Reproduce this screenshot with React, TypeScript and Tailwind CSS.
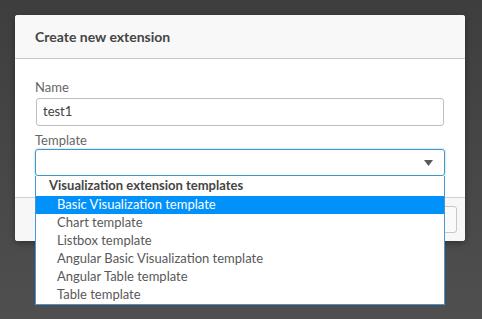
const options = [
  'Basic Visualization template',
  'Chart template',
  'Listbox template',
  'Angular Basic Visualization template',
  'Angular Table template',
  'Table template',
];

export default function App() {
  return (
    <div
      className="h-[319px] w-[482px] bg-gradient-to-b from-[#3e3e3e] to-[#4f4f4f] pl-[15px] pt-[15px] text-[13px] text-[#595959]"
      style={{ fontFamily: 'Lato, "Open Sans", sans-serif' }}
    >
      <div className="relative flex h-[226px] w-[450px] flex-col rounded-[3px] bg-white shadow-[0_2px_6px_rgba(0,0,0,0.35)]">
        <div className="flex h-[44px] items-center border-b border-[#c8c8c8] bg-[#f8f8f8] px-5 rounded-t-[3px]">
          <h1 className="text-[14px] font-bold text-[#454545]">Create new extension</h1>
        </div>

        <div className="flex flex-1 flex-col px-5 pt-[20px]">
          <label className="h-[16px] leading-[16px] text-[#666]">Name</label>
          <div className="mx-px mt-[3px] flex h-[28px] items-center rounded-[3px] border border-[#bdbdbd] px-[6px] text-[#404040]">
            test1
          </div>

          <label className="mt-[6px] h-[16px] leading-[16px] text-[#666]">Template</label>
          <div className="relative mt-[1px]">
            <div className="flex h-[27px] items-center justify-end rounded-[3px] border border-[#3d98c9] pr-[11px] shadow-[0_0_2px_rgba(61,152,201,0.6)]">
              <svg width="9" height="6" viewBox="0 0 9 6">
                <path d="M0 0h9L4.5 6z" fill="#595959" />
              </svg>
            </div>

            <ul className="absolute left-0 top-[27px] z-10 w-[410px] border border-t-0 border-[#4a94d6] bg-white text-[#595959]">
              <li className="flex h-[20px] items-center pl-[13px] font-bold text-[#454545]">
                Visualization extension templates
              </li>
              {options.map((opt, i) => (
                <li
                  key={opt}
                  className={
                    i === 0
                      ? 'flex h-[18px] items-center bg-[#0091fa] pl-[21px] text-white'
                      : 'flex h-[18px] items-center pl-[21px]'
                  }
                >
                  {opt}
                </li>
              ))}
            </ul>
          </div>
        </div>

        <div className="flex h-[44px] items-center justify-end border-t border-[#d0d0d0] bg-[#f7f7f7] pr-[8px] rounded-b-[3px]">
          <button className="h-[27px] w-[80px] rounded-[3px] border border-[#c8c8c8] bg-[#fafafa] text-[#404040]">
            Create
          </button>
        </div>
      </div>
    </div>
  );
}
